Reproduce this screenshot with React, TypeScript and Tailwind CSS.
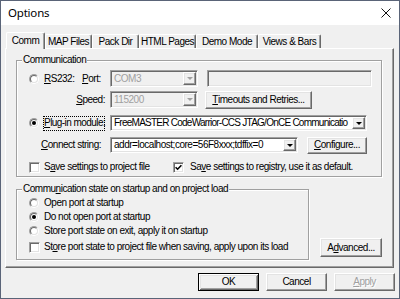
import React from 'react';

const raised =
  'border border-t-white border-l-white border-r-[#696969] border-b-[#696969] shadow-[inset_-1px_-1px_0_#a0a0a0,inset_1px_1px_0_#e3e3e3] bg-[#f0f0f0]';
const sunken =
  'border border-t-[#a0a0a0] border-l-[#a0a0a0] border-r-white border-b-white shadow-[inset_1px_1px_0_#696969,inset_-1px_-1px_0_#e3e3e3]';

const U = ({ children }: { children: React.ReactNode }) => (
  <span className="underline underline-offset-[1px]">{children}</span>
);

const Radio = ({ checked, className = '' }: { checked?: boolean; className?: string }) => (
  <span
    className={`w-[10px] h-[10px] shrink-0 rounded-full border border-t-[#a0a0a0] border-l-[#a0a0a0] border-r-white border-b-white flex items-center justify-center ${className}`}
  >
    <span className="w-[8px] h-[8px] rounded-full border border-t-[#696969] border-l-[#696969] border-r-[#e3e3e3] border-b-[#e3e3e3] bg-white flex items-center justify-center">
      {checked && <span className="w-[4px] h-[4px] rounded-full bg-black" />}
    </span>
  </span>
);

const Check = ({ checked, className = '' }: { checked?: boolean; className?: string }) => (
  <span className={`w-[11px] h-[11px] shrink-0 bg-white flex items-center justify-center ${sunken} ${className}`}>
    {checked && (
      <svg width="7" height="7" viewBox="0 0 7 7">
        <path d="M0.6 3.2 L2.6 5.2 L6.4 1.2" stroke="#000" strokeWidth="1.6" fill="none" />
      </svg>
    )}
  </span>
);

const Combo = ({
  text,
  disabled,
  className = '',
  textClass = '',
}: {
  text: string;
  disabled?: boolean;
  className?: string;
  textClass?: string;
}) => (
  <div
    className={`h-full flex items-stretch p-px ${sunken} ${disabled ? 'bg-[#f0f0f0] text-[#a0a0a0]' : 'bg-white text-black'} ${className}`}
  >
    <span className={`flex-1 min-w-0 overflow-hidden whitespace-nowrap flex items-center pl-[2px] ${textClass}`}>{text}</span>
    <span className={`w-[13px] shrink-0 flex items-center justify-center ${raised}`}>
      <svg width="6" height="3" viewBox="0 0 6 3">
        <path d="M0 0H6L3 3Z" fill={disabled ? '#a0a0a0' : '#000'} />
      </svg>
    </span>
  </div>
);

const Button = ({
  children,
  className = '',
  primary,
  disabled,
}: {
  children: React.ReactNode;
  className?: string;
  primary?: boolean;
  disabled?: boolean;
}) => (
  <div
    className={`shrink-0 flex items-center justify-center whitespace-nowrap ${
      primary
        ? 'border border-black bg-[#f0f0f0] shadow-[inset_1px_1px_0_#fff,inset_-1px_-1px_0_#696969,inset_2px_2px_0_#e3e3e3,inset_-2px_-2px_0_#a0a0a0]'
        : raised
    } ${disabled ? 'text-[#a0a0a0] [text-shadow:1px_1px_0_#fff]' : 'text-black'} ${className}`}
  >
    {children}
  </div>
);

const Group = ({
  title,
  className = '',
  children,
}: {
  title: React.ReactNode;
  className?: string;
  children: React.ReactNode;
}) => (
  <div className={`relative shrink-0 border border-[#a0a0a0] shadow-[1px_1px_0_#fff,inset_1px_1px_0_#fff] ${className}`}>
    <span className="absolute -top-[7px] left-[5px] px-[1px] bg-[#f0f0f0] leading-[12px] whitespace-nowrap">{title}</span>
    {children}
  </div>
);

const tabs = [
  { label: 'Comm', w: 'w-[39px]', sel: true },
  { label: 'MAP Files', w: 'w-[47px]' },
  { label: 'Pack Dir', w: 'w-[47px]' },
  { label: 'HTML Pages', w: 'w-[57px]' },
  { label: 'Demo Mode', w: 'w-[62px]' },
  { label: 'Views & Bars', w: 'w-[63px]' },
];

export default function App() {
  return (
    <div className="w-[400px] h-[299px] overflow-hidden bg-[#f0f0f0] border border-[#5a6478] flex flex-col font-['Liberation_Sans',Arial,sans-serif] text-[10px] leading-[12px] tracking-[-0.48px] text-black">
      {/* title bar */}
      <div className="h-[24px] shrink-0 bg-white flex items-center justify-between pl-[7px] pr-[8px]">
        <span className="font-['Noto_Sans',sans-serif] text-[11.5px] tracking-[-0.2px]">Options</span>
        <svg width="10" height="10" viewBox="0 0 10 10">
          <path d="M0.5 0.5L9.5 9.5M9.5 0.5L0.5 9.5" stroke="#111" strokeWidth="1" />
        </svg>
      </div>

      {/* tabs */}
      <div className="mt-[7px] ml-[5px] h-[16px] flex items-end shrink-0">
        {tabs.map((t) =>
          t.sel ? (
            <div
              key={t.label}
              className={`${t.w} h-[17px] -mb-px relative z-10 bg-[#f0f0f0] border-t border-l border-r border-t-white border-l-white border-r-[#696969] shadow-[inset_-1px_0_0_#a0a0a0] rounded-t-[2px] flex items-center justify-center pb-[1px]`}
            >
              {t.label}
            </div>
          ) : (
            <div
              key={t.label}
              className={`${t.w} h-[14px] border-t border-l border-r border-t-white border-l-white border-r-[#696969] shadow-[inset_-1px_0_0_#a0a0a0] rounded-t-[2px] flex items-center justify-center whitespace-nowrap`}
            >
              {t.label}
            </div>
          )
        )}
      </div>

      {/* tab panel */}
      <div className="ml-[4px] w-[389px] h-[220px] shrink-0 border border-t-white border-l-white border-r-[#696969] border-b-[#696969] shadow-[inset_-1px_-1px_0_#a0a0a0] pt-[11px] pl-[10px] pr-[11px] pb-[7px] flex flex-col">
        <Group title="Communication" className="w-[366px] h-[117px] pt-[9px] flex flex-col">
          <div className="flex items-center h-[17px]">
            <Radio className="ml-[12px]" />
            <span className="ml-[5px] w-[38px]">
              <U>R</U>S232:
            </span>
            <span className="w-[28px]">
              <U>P</U>ort:
            </span>
            <Combo className="w-[88px]" text="COM3" disabled />
            <div className={`ml-[9px] w-[165px] h-full bg-[#f0f0f0] ${sunken}`} />
          </div>

          <div className="flex items-center h-[17px] mt-[4px]">
            <span className="w-[93px] text-right pr-[5px]">
              <U>S</U>peed:
            </span>
            <Combo className="w-[88px]" text="115200" disabled />
            <Button className="ml-[7px] w-[107px] h-[18px]">
              <U>T</U>imeouts and Retries...
            </Button>
          </div>

          <div className="flex items-center h-[16px] mt-[7px]">
            <Radio checked className="ml-[12px]" />
            <span className="ml-[4px] w-[62px] h-[15px] shrink-0 border border-dotted border-black flex items-center whitespace-nowrap tracking-[-0.55px]">
              <U>P</U>lug-in module:
            </span>
            <Combo
              className="ml-[5px] w-[257px]"
              textClass="tracking-[-0.75px]"
              text="FreeMASTER CodeWarrior-CCS JTAG/OnCE Communicatio"
            />
          </div>

          <div className="flex items-center h-[16px] mt-[6px]">
            <span className="ml-[24px] w-[69px] whitespace-nowrap">
              <U>C</U>onnect string:
            </span>
            <Combo className="w-[188px]" text="addr=localhost;core=56F8xxx;tdffix=0" />
            <Button className="ml-[9px] w-[60px] h-[17px]">
              <U>C</U>onfigure...
            </Button>
          </div>

          <div className="flex items-center h-[12px] mt-[8px]">
            <Check className="ml-[12px]" />
            <span className="ml-[4px] w-[129px] whitespace-nowrap">
              S<U>a</U>ve settings to project file
            </span>
            <Check checked />
            <span className="ml-[6px] whitespace-nowrap">
              Sa<U>v</U>e settings to registry, use it as default.
            </span>
          </div>
        </Group>

        <div className="flex items-end mt-[12px]">
          <Group
            title={
              <>
                Commu<U>n</U>ication state on startup and on project load
              </>
            }
            className="w-[293px] h-[71px] pt-[6px] flex flex-col"
          >
            <div className="flex items-center h-[14px]">
              <Radio className="ml-[12px]" />
              <span className="ml-[5px]">Open port at startup</span>
            </div>
            <div className="flex items-center h-[14px]">
              <Radio checked className="ml-[12px]" />
              <span className="ml-[5px]">Do not open port at startup</span>
            </div>
            <div className="flex items-center h-[14px]">
              <Radio className="ml-[12px]" />
              <span className="ml-[5px]">Store port state on exit, apply it on startup</span>
            </div>
            <div className="flex items-center h-[12px] mt-[3px]">
              <Check className="ml-[12px]" />
              <span className="ml-[4px] whitespace-nowrap">
                St<U>o</U>re port state to project file when saving, apply upon its load
              </span>
            </div>
          </Group>
          <Button className="ml-[11px] mb-[3px] w-[62px] h-[19px]">
            A<U>d</U>vanced...
          </Button>
        </div>
      </div>

      {/* dialog buttons */}
      <div className="flex justify-end gap-[7px] mt-[5px] pr-[4px] shrink-0">
        <Button primary className="w-[61px] h-[18px]">
          OK
        </Button>
        <Button className="w-[61px] h-[18px]">Cancel</Button>
        <Button disabled className="w-[61px] h-[18px]">
          <U>A</U>pply
        </Button>
      </div>
    </div>
  );
}
